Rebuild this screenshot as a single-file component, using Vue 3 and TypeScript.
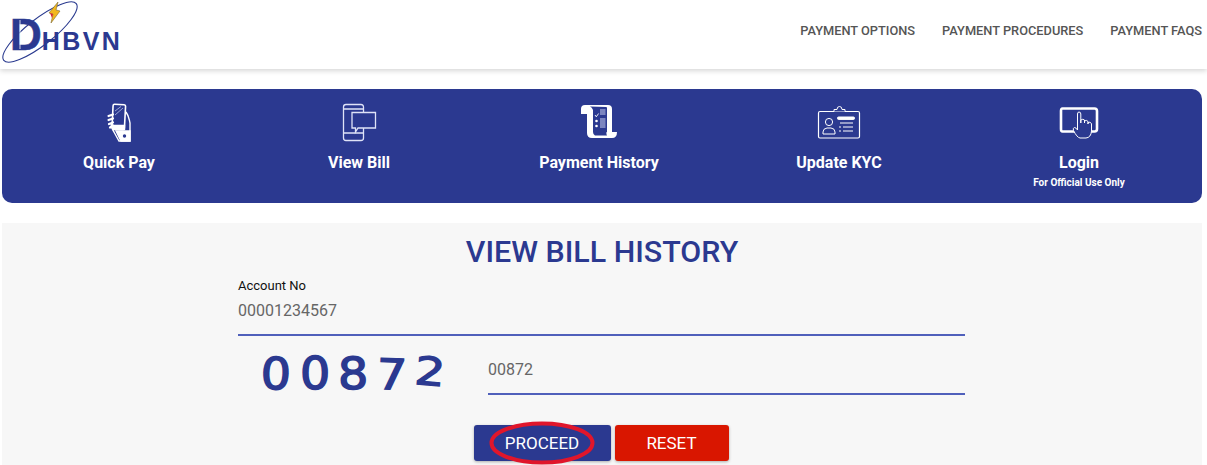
<script setup lang="ts">
const links: string[] = ['Payment Options', 'Payment Procedures', 'Payment FAQs']
const digits = [
  { c: '0', r: 2, y: 0, s: 1 },
  { c: '0', r: 0, y: 0, s: 1 },
  { c: '8', r: -1, y: 0, s: 1 },
  { c: '7', r: 2, y: 1, s: 0.96 },
  { c: '2', r: 5, y: -2, s: 0.88 },
]
</script>

<template>
  <div class="page">
    <header class="header">
      <div class="logo">
        <span class="logo-d">D</span><span class="logo-rest">HBVN</span>
        <svg class="orbit" width="84" height="64" viewBox="0 0 84 64" aria-hidden="true">
          <ellipse cx="40" cy="32" rx="46" ry="13" transform="rotate(-38 40 32)" fill="none" stroke="#2a3a8f" stroke-width="1.1" />
          <path d="M20 20 V49" stroke="#fff" stroke-width="1" opacity=".8" />
          <path d="M58 2 L49 13 L53 14 L51 23 L60 11 L56 10 Z" fill="#f2b81e" stroke="#7d6a30" stroke-width=".6" />
          <path d="M50 13 L53 14 L52 18 Z" fill="#d8262c" />
        </svg>
      </div>
      <nav class="top-links">
        <a v-for="l in links" :key="l">{{ l }}</a>
      </nav>
    </header>

    <section class="menu">
      <div class="menu-item">
        <svg width="40" height="40" viewBox="0 0 40 40" fill="none" stroke="#fff" stroke-width="1.4">
          <rect x="13.5" y="1.5" width="12.5" height="25" rx="1.5" transform="rotate(3 20 14)" stroke-width="1.6" />
          <path d="M16 8 L22 3.5 M16 12 L24 5" stroke="#b9c0e6" stroke-width=".8" />
          <path d="M14 22.5 H25.5 V26.5 H14 Z" fill="#fff" />
          <path d="M27 9 C30 13 30 16 31 20 V38 H20 L15 29 C13 26 13 24 12 21" />
          <path d="M9.5 13 L14 11.5 M9.5 17 L14 15.5 M10 21 L14 19.5 M11 24.5 L14 22.5" stroke-width="2.2" stroke-linecap="round" />
          <path d="M17 28 L22 38 H31 V28 Z" fill="#fff" />
          <circle cx="25.5" cy="33" r="1.7" fill="#2b3990" stroke="none" />
        </svg>
        <span class="menu-label">Quick Pay</span>
      </div>
      <div class="menu-item">
        <svg width="40" height="40" viewBox="0 0 40 40" fill="none" stroke="#dfe3f7" stroke-width="1.3">
          <path d="M24.5 9 V4 Q24.5 1.5 22 1.5 H7 Q4.5 1.5 4.5 4 V35 Q4.5 37.5 7 37.5 H22 Q24.5 37.5 24.5 35 V25" />
          <path d="M4.5 6 H24.5 M4.5 30 H24.5" />
          <path d="M13 9.5 H36.5 V25 H19 L16.5 29 V25 H13 Z" />
        </svg>
        <span class="menu-label">View Bill</span>
      </div>
      <div class="menu-item">
        <svg width="40" height="40" viewBox="0 0 40 40" fill="none" stroke="#fff">
          <path d="M2 6 Q2 2 6 2 H29 Q33 2 33 6 V29 H38 Q38 35 33 35 H13 Q8 35 8 30 V11 H2 Z" fill="#fff" stroke="none" />
          <path d="M11 3.5 Q13 4 14 7 V29 Q14 31.5 16 32.5 H28 Q27 31 27.5 29 H28 V5 Q28 4 27 4 Z" fill="#2b3990" stroke="none" />
          <path d="M16 12 L17.3 13.8 L19.6 10.5" stroke-width=".9" />
          <circle cx="17.5" cy="18" r="1.3" fill="#fff" stroke="none" />
          <circle cx="17.5" cy="23" r="1.3" fill="#fff" stroke="none" />
          <path d="M21 7 H26.5 M21 9 H26.5 M21 11 H26.5 M21 16 H26.5 M21 18 H26.5 M21 20 H26.5 M21 22 H26.5 M21 24 H26.5" stroke="#cfd4ef" stroke-width="1" />
        </svg>
        <span class="menu-label">Payment History</span>
      </div>
      <div class="menu-item">
        <svg width="44" height="40" viewBox="0 0 44 40" fill="none" stroke="#fff" stroke-width="1">
          <rect x="1.5" y="8.5" width="41" height="26.5" rx="1.5" stroke-width="1.2" />
          <path d="M17 8.5 V6.5 H20 Q20 3.5 22.5 3.5 Q25 3.5 25 6.5 H28 V8.5" fill="#2b3990" />
          <circle cx="12" cy="19" r="3.6" />
          <path d="M6 31 V29 Q6 25.5 10 25 H14 Q18 25.5 18 29 V31 H6 Z" />
          <rect x="20.5" y="14" width="17" height="2.4" rx="1" fill="#fff" />
          <path d="M23 20 H36 M22 24 H24 M26 24 H36 M22 28 H24 M26 28 H36" stroke-width="1.2" />
        </svg>
        <span class="menu-label">Update KYC</span>
      </div>
      <div class="menu-item login">
        <svg width="40" height="40" viewBox="0 0 40 40" fill="none" stroke="#fff">
          <path d="M3.5 5.5 H35.5 Q38 5.5 38 8 V26 Q38 28.5 35.5 28.5 H3.5 Q2 28.5 2 26 V8 Q2 5.5 3.5 5.5 Z" stroke-width="2.6" />
          <path d="M18.5 27 V11 Q18.5 9 20 9 Q21.8 9 21.8 11 V20 V17 Q24 15.5 25.5 17 V20 V18 Q27.5 16.5 29 18.5 V21 V19.5 Q31 18.5 32.5 20.5 V28 Q32 34.5 27 35 H21 Q18 34.5 14.5 27.5 Q13.5 25 15.5 24.5 Q17 24.5 18.5 27 Z" fill="#2b3990" stroke-width="1" stroke-linejoin="round" />
        </svg>
        <span class="menu-label">Login</span>
        <span class="menu-sub">For Official Use Only</span>
      </div>
    </section>

    <main class="panel">
      <h1 class="title">VIEW BILL HISTORY</h1>
      <form class="form" @submit.prevent>
        <label class="field">
          <span class="field-label">Account No</span>
          <span class="field-value">00001234567</span>
        </label>
        <div class="captcha-row">
          <div class="captcha">
            <span
              v-for="(d, i) in digits"
              :key="i"
              class="digit"
              :style="{ transform: `translateY(${d.y}px) rotate(${d.r}deg) scale(1.08, ${d.s})` }"
            >{{ d.c }}</span>
          </div>
          <div class="captcha-input">00872</div>
        </div>
        <div class="actions">
          <button type="button" class="btn proceed">
            PROCEED
            <svg class="ring" width="106" height="44" viewBox="0 0 106 44" aria-hidden="true">
              <ellipse cx="53" cy="22" rx="50.5" ry="19.5" fill="none" stroke="#e0162b" stroke-width="4" />
            </svg>
          </button>
          <button type="button" class="btn reset">RESET</button>
        </div>
      </form>
    </main>
  </div>
</template>

<style>
html, body {
  margin: 0;
  background: #fff;
  overflow: hidden;
}
</style>

<style scoped>
.page {
  width: 1207px;
  height: 465px;
  overflow: hidden;
  font-family: Roboto, "Liberation Sans", sans-serif;
}
.header {
  height: 69px;
  box-sizing: border-box;
  display: flex;
  justify-content: space-between;
  background: #fff;
  box-shadow: 0 2px 5px rgba(0, 0, 0, 0.16);
  padding-right: 5px;
}
.logo {
  position: relative;
  display: flex;
  align-items: baseline;
  width: 130px;
  height: 56px;
  padding: 14px 0 0 10px;
  box-sizing: border-box;
  color: #2b3990;
  font-weight: 700;
  font-family: "Liberation Sans", sans-serif;
}
.orbit {
  position: absolute;
  left: 0;
  top: 0;
}
.logo-d {
  font-size: 44px;
  line-height: 42px;
  -webkit-text-stroke: 0.6px #2b3990;
}
.logo-rest {
  font-size: 25px;
  line-height: 26px;
  letter-spacing: 2.4px;
}
.top-links {
  display: flex;
  gap: 27px;
  padding-top: 23px;
}
.top-links a {
  font-size: 12.8px;
  line-height: 15px;
  font-weight: 500;
  color: #555;
  text-transform: uppercase;
}
.menu {
  margin: 20px 5px 0 2px;
  height: 114px;
  border-radius: 10px;
  background: #2b3990;
  display: grid;
  grid-template-columns: repeat(5, 240px);
  justify-content: center;
  color: #fff;
  padding-right: 6px;
  box-sizing: border-box;
}
.menu-item {
  display: flex;
  flex-direction: column;
  align-items: center;
  padding-top: 14px;
}
.menu-item svg {
  height: 40px;
}
.menu-label {
  margin-top: 10px;
  font-size: 16px;
  line-height: 20px;
  font-weight: 700;
}
.menu-sub {
  margin-top: 4px;
  font-size: 10px;
  line-height: 12px;
  font-weight: 700;
}
.panel {
  margin: 20px 5px 0 2px;
  height: 242px;
  background: #f7f7f7;
  display: flex;
  flex-direction: column;
  align-items: center;
}
.title {
  margin: 11px 0 0;
  font-size: 30.4px;
  line-height: 35px;
  font-weight: 500;
  color: #2b3990;
}
.form {
  width: 727px;
  margin-left: -1px;
}
.field {
  display: block;
  height: 62px;
  border-bottom: 2px solid #5060bb;
  margin-top: 5px;
  box-sizing: border-box;
}
.field-label {
  display: block;
  font-size: 13px;
  line-height: 24px;
  color: #111;
}
.field-value {
  display: block;
  font-size: 16px;
  line-height: 26px;
  color: #666;
}
.captcha-row {
  display: flex;
  align-items: flex-start;
  padding-top: 8px;
}
.captcha {
  width: 250px;
  height: 50px;
  box-sizing: border-box;
  display: flex;
  padding: 7px 0 0 24px;
  gap: 10.5px;
  color: #2b3990;
  font-family: "DejaVu Sans", sans-serif;
  font-size: 44px;
  line-height: 46px;
  -webkit-text-stroke: 1.5px #2b3990;
}
.digit {
  display: block;
  width: 28px;
  text-align: center;
}
.captcha-input {
  flex: 1;
  box-sizing: border-box;
  border-bottom: 2px solid #5060bb;
  font-size: 16px;
  line-height: 52px;
  color: #666;
  height: 51px;
}
.actions {
  display: flex;
  justify-content: center;
  gap: 4px;
  margin-top: 30px;
  margin-left: -1px;
}
.btn {
  height: 36px;
  border: 0;
  border-radius: 3px;
  color: #fff;
  font-family: inherit;
  font-size: 17px;
  box-shadow: 0 1px 3px rgba(0, 0, 0, 0.3);
  padding: 0;
}
.proceed {
  position: relative;
  width: 137px;
  background: #2b3990;
}
.reset {
  width: 114px;
  background: #d91600;
}
.ring {
  position: absolute;
  left: 15px;
  top: -4px;
}
</style>
